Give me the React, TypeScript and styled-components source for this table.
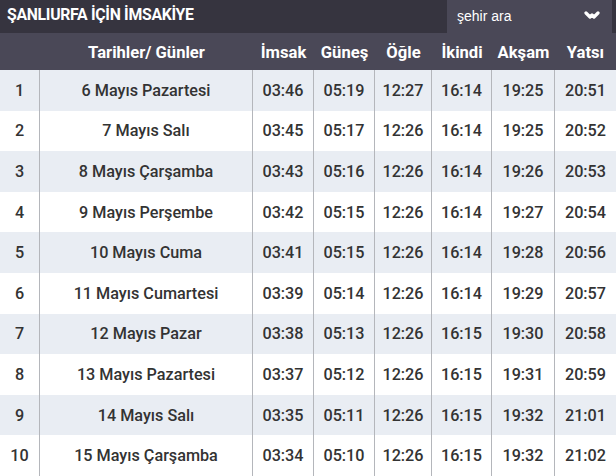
import React from "react";
import styled, { createGlobalStyle } from "styled-components";

const Global = createGlobalStyle`
  html, body { margin: 0; padding: 0; background: #ffffff; }
  body { font-family: Roboto, "Noto Sans", sans-serif; }
`;

const COLS = "40px 213px 61px 61px 57px 60px 63px 61px";

const Wrap = styled.div`
  width: 616px;
  height: 476px;
  overflow: hidden;
  background: #ffffff;
`;

const TitleBar = styled.div`
  height: 33px;
  background: #36343f;
  display: flex;
  align-items: stretch;
  justify-content: space-between;
`;

const Title = styled.h1`
  margin: 0;
  padding: 5px 0 0 7px;
  font-family: Roboto, sans-serif;
  font-size: 15.8px;
  font-weight: 700;
  color: #ffffff;
  letter-spacing: -0.3px;
`;

const Search = styled.div`
  width: 165px;
  margin-right: 4px;
  background: #4a4857;
  display: flex;
  align-items: center;
  justify-content: space-between;
  padding: 0 12px 2px 10px;
  box-sizing: border-box;
  color: #ffffff;
  font-family: "Liberation Sans", Arial, sans-serif;
  font-size: 14px;
`;

const Grid = styled.div`
  display: grid;
  grid-template-columns: ${COLS};
`;

const HeaderRow = styled(Grid)`
  height: 37px;
  background: #4a4857;
`;

const HeadCell = styled.div`
  display: flex;
  align-items: center;
  justify-content: center;
  color: #ffffff;
  font-size: 16.6px;
  font-weight: 700;
  padding-top: 1px;
`;

const Row = styled(Grid)<{ $odd: boolean }>`
  height: 40.6px;
  background: ${(p) => (p.$odd ? "#e9edf3" : "#ffffff")};
`;

const Cell = styled.div<{ $last?: boolean }>`
  display: flex;
  align-items: center;
  justify-content: center;
  color: #333333;
  font-size: 16.2px;
  font-weight: 500;
  border-right: ${(p) => (p.$last ? "none" : "1px solid #b4b6bb")};
`;

const headers = ["", "Tarihler/ Günler", "İmsak", "Güneş", "Öğle", "İkindi", "Akşam", "Yatsı"];

const rows: string[][] = [
  ["6 Mayıs Pazartesi", "03:46", "05:19", "12:27", "16:14", "19:25", "20:51"],
  ["7 Mayıs Salı", "03:45", "05:17", "12:26", "16:14", "19:25", "20:52"],
  ["8 Mayıs Çarşamba", "03:43", "05:16", "12:26", "16:14", "19:26", "20:53"],
  ["9 Mayıs Perşembe", "03:42", "05:15", "12:26", "16:14", "19:27", "20:54"],
  ["10 Mayıs Cuma", "03:41", "05:15", "12:26", "16:14", "19:28", "20:56"],
  ["11 Mayıs Cumartesi", "03:39", "05:14", "12:26", "16:14", "19:29", "20:57"],
  ["12 Mayıs Pazar", "03:38", "05:13", "12:26", "16:15", "19:30", "20:58"],
  ["13 Mayıs Pazartesi", "03:37", "05:12", "12:26", "16:15", "19:31", "20:59"],
  ["14 Mayıs Salı", "03:35", "05:11", "12:26", "16:15", "19:32", "21:01"],
  ["15 Mayıs Çarşamba", "03:34", "05:10", "12:26", "16:15", "19:32", "21:02"],
];

const Chevron = () => (
  <svg width="16" height="9" viewBox="0 0 16 9" fill="none">
    <polyline points="2,2 6,6 8,4 10,6 14,2" stroke="#ffffff" strokeWidth="3.2" strokeLinecap="round" strokeLinejoin="round" />
  </svg>
);

export default function App() {
  return (
    <Wrap>
      <Global />
      <TitleBar>
        <Title>ŞANLIURFA İÇİN İMSAKİYE</Title>
        <Search>
          <span>şehir ara</span>
          <Chevron />
        </Search>
      </TitleBar>
      <HeaderRow>
        {headers.map((h, i) => (
          <HeadCell key={i}>{h}</HeadCell>
        ))}
      </HeaderRow>
      {rows.map((r, i) => (
        <Row key={i} $odd={i % 2 === 0}>
          <Cell>{i + 1}</Cell>
          {r.map((v, j) => (
            <Cell key={j} $last={j === r.length - 1}>
              {v}
            </Cell>
          ))}
        </Row>
      ))}
    </Wrap>
  );
}
